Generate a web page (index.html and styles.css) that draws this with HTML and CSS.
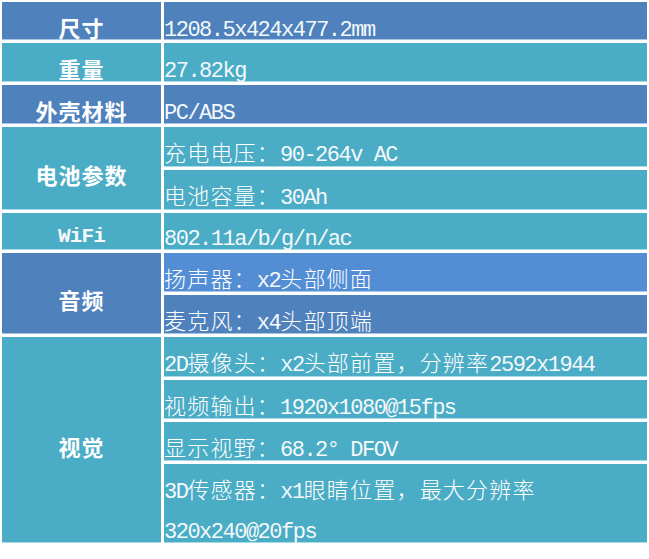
FILE: index.html
```html
<!DOCTYPE html>
<html lang="zh-CN">
<head>
<meta charset="utf-8">
<title>规格参数</title>
<link rel="stylesheet" href="styles.css">
</head>
<body>
<div class="spec">
  <div class="k blue r1">尺寸</div>
  <div class="v blue r1"><span class="en">1208.5x424x477.2mm</span></div>

  <div class="k teal r2">重量</div>
  <div class="v teal r2"><span class="en">27.82kg</span></div>

  <div class="k blue r3">外壳材料</div>
  <div class="v blue r3"><span class="en">PC/ABS</span></div>

  <div class="k teal r4-5">电池参数</div>
  <div class="v teal r4">充电电压：<span class="en">90-264v AC</span></div>
  <div class="v teal r5">电池容量：<span class="en">30Ah</span></div>

  <div class="k teal r6"><span class="en">WiFi</span></div>
  <div class="v teal r6 short"><span class="en">802.11a/b/g/n/ac</span></div>

  <div class="k blue r7-8">音频</div>
  <div class="v bright r7">扬声器：<span class="en">x2</span>头部侧面</div>
  <div class="v blue r8">麦克风：<span class="en">x4</span>头部顶端</div>

  <div class="k teal r9-12">视觉</div>
  <div class="v teal r9"><span class="en">2D</span>摄像头：<span class="en">x2</span>头部前置，分辨率<span class="en">2592x1944</span></div>
  <div class="v teal r10">视频输出：<span class="en">1920x1080@15fps</span></div>
  <div class="v teal r11">显示视野：<span class="en">68.2° DFOV</span></div>
  <div class="v teal r12 multi"><span class="en">3D</span>传感器：<span class="en">x1</span>眼睛位置，最大分辨率<br><span class="en">320x240@20fps</span></div>
</div>
</body>
</html>
```

FILE: styles.css
```css
html, body {
  margin: 0;
  padding: 0;
  background: #ffffff;
}

.spec {
  display: grid;
  grid-template-columns: 159px 483px;
  grid-template-rows: 38px 39px 39px 40px 40px 37px 39px 39px 40px 39px 39px 79px;
  column-gap: 3px;
  row-gap: 3px;
  padding: 2px 0 0 2px;
  width: 645px;
  font-family: "Noto Sans CJK SC", sans-serif;
  color: #ffffff;
}

.blue { background: #4f81bd; box-shadow: inset 0 -1px 0 #a9c4e3; }
.teal { background: #4bacc6; box-shadow: inset 0 -1px 0 #a7dbe8; }
.bright { background: #538ed5; box-shadow: inset 0 -1px 0 #acc8ec; }

.k, .v {
  box-sizing: border-box;
  white-space: nowrap;
}

.k {
  grid-column: 1;
  display: flex;
  align-items: center;
  justify-content: center;
  padding-top: 11px;
  font-size: 22px;
  font-weight: 700;
  letter-spacing: 1px;
}

.k .en {
  font-size: 21px;
  letter-spacing: -0.9px;
}

.v {
  grid-column: 2;
  display: block;
  line-height: 34px;
  padding-top: 7px;
  font-size: 22px;
  font-weight: 300;
  letter-spacing: 1.2px;
}

.en {
  font-family: "Liberation Mono", monospace;
  font-size: 22px;
  line-height: 20px;
  letter-spacing: -1.5px;
  color: #f4f9fb;
}

.short {
  padding-top: 5px;
}

.multi {
  line-height: 40px;
  padding-top: 4px;
}

.r1 { grid-row: 1; }
.r2 { grid-row: 2; }
.r3 { grid-row: 3; }
.r4 { grid-row: 4; }
.r5 { grid-row: 5; }
.r4-5 { grid-row: 4 / 6; }
.r6 { grid-row: 6; }
.r7 { grid-row: 7; }
.r8 { grid-row: 8; }
.r7-8 { grid-row: 7 / 9; }
.r9 { grid-row: 9; }
.r10 { grid-row: 10; }
.r11 { grid-row: 11; }
.r12 { grid-row: 12; }
.r9-12 { grid-row: 9 / 13; }
```
